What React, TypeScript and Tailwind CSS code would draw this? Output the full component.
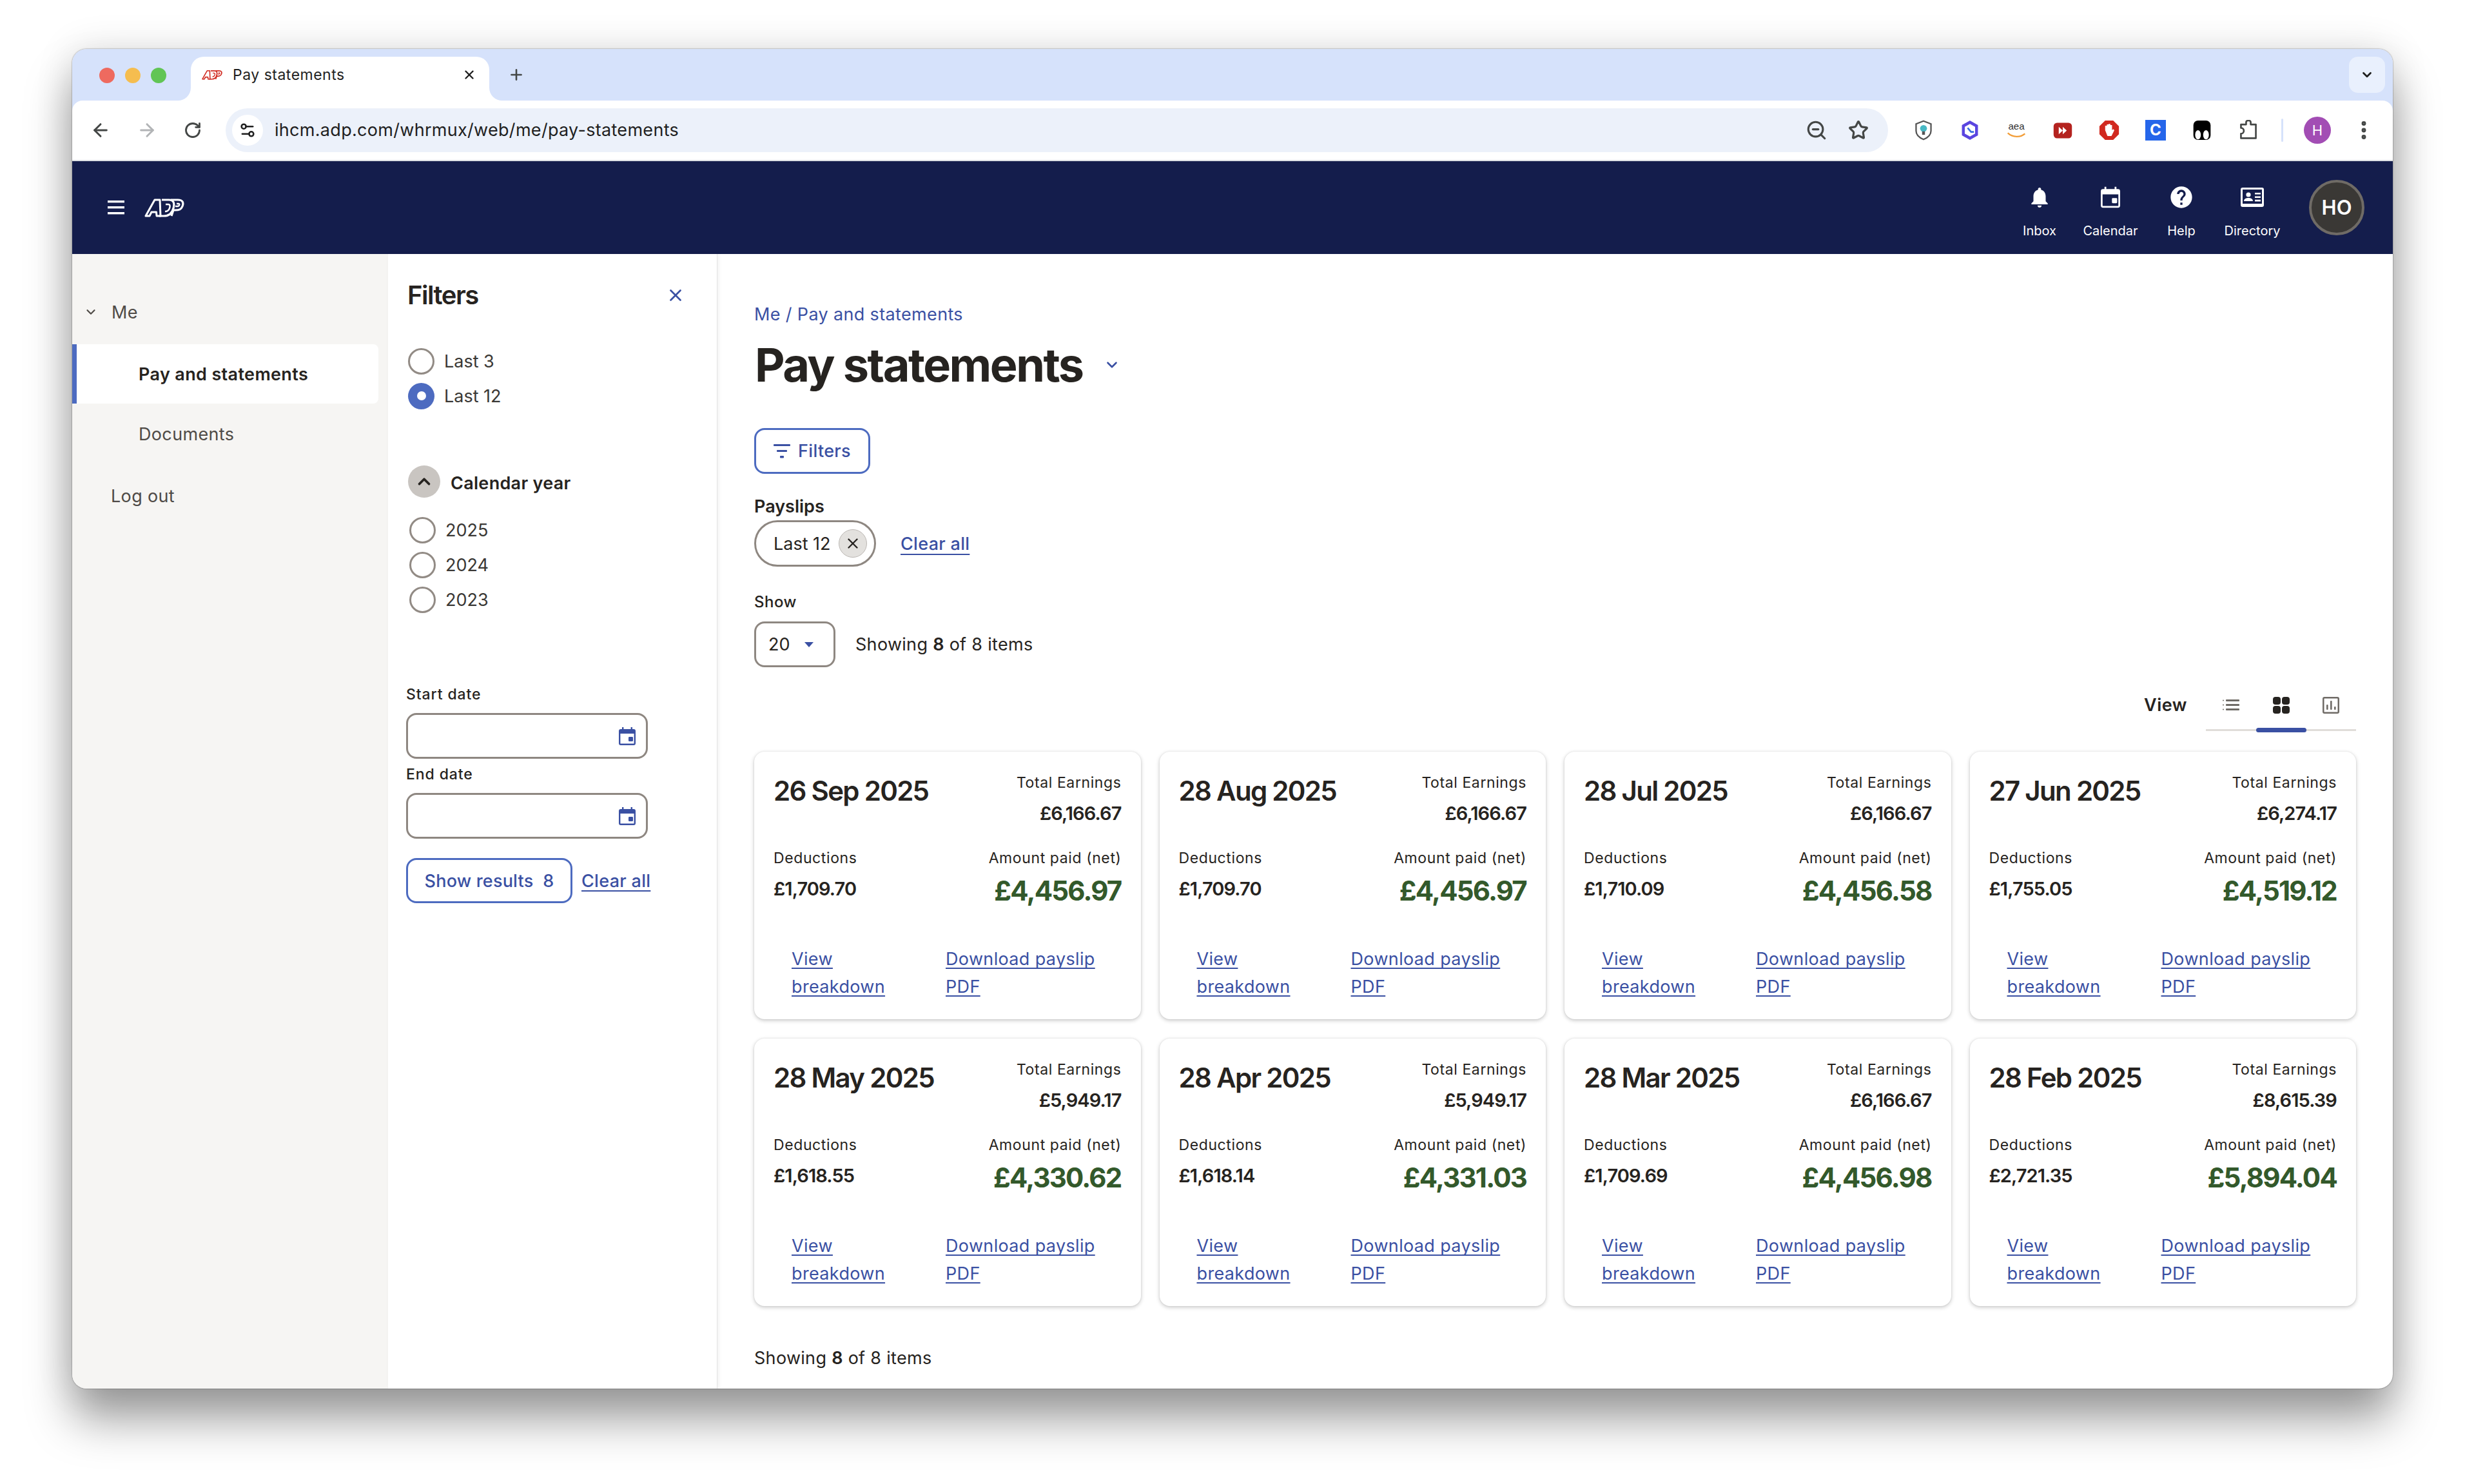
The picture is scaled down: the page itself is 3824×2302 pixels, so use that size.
import { ArrowLeft, ArrowRight, ChevronDown, ChevronUp, EllipsisVertical, Plus, RotateCw, Settings2, Star, X, ZoomOut } from 'lucide-react';

const slips = [
  { date: '26 Sep 2025', total: '£6,166.67', deductions: '£1,709.70', net: '£4,456.97' },
  { date: '28 Aug 2025', total: '£6,166.67', deductions: '£1,709.70', net: '£4,456.97' },
  { date: '28 Jul 2025', total: '£6,166.67', deductions: '£1,710.09', net: '£4,456.58' },
  { date: '27 Jun 2025', total: '£6,274.17', deductions: '£1,755.05', net: '£4,519.12' },
  { date: '28 May 2025', total: '£5,949.17', deductions: '£1,618.55', net: '£4,330.62' },
  { date: '28 Apr 2025', total: '£5,949.17', deductions: '£1,618.14', net: '£4,331.03' },
  { date: '28 Mar 2025', total: '£6,166.67', deductions: '£1,709.69', net: '£4,456.98' },
  { date: '28 Feb 2025', total: '£8,615.39', deductions: '£2,721.35', net: '£5,894.04' },
];

function AdpLogo({ className, color }: { className: string; color: string }) {
  return (
    <svg viewBox="0 0 62 30" className={className} fill="none" stroke={color} strokeLinejoin="round">
      <path d="M2 28 L16 3 H24 L25 28 H19 L18.500 22 H11 L8 28 Z" strokeWidth="3" />
      <path d="M27 3 H38 C46 3 47 9 45 16 C43 24 38 28 30 28 H23" strokeWidth="3.200" />
      <path d="M41 3 H52 C60 3 61 8 59 13 C57 18 54 19 48 19 H45 L42 28" strokeWidth="3.200" />
      <path d="M33 10 H37 C40 10 40 13 39 16 C38 19 35 21 32 21" strokeWidth="2.400" />
      <path d="M50 9 H53 C55 9 55 12 52 13 H48" strokeWidth="2.400" />
    </svg>
  );
}

function CalendarIcon({ className }: { className: string }) {
  return (
    <svg viewBox="0 0 26 28" className={className} fill="currentColor">
      <path d="M5 0h2.400v3h11.200V0H21v3h2a3 3 0 0 1 3 3v19a3 3 0 0 1-3 3H3a3 3 0 0 1-3-3V6a3 3 0 0 1 3-3h2zM2.400 10v15c0 .4.2.6.6.6h20c.4 0 .6-.2.6-.6V10z" fillRule="evenodd" />
      <rect x="15" y="15" width="7" height="7" rx="1.200" />
    </svg>
  );
}

function Radio({ checked, label }: { checked?: boolean; label: string }) {
  return (
    <div className="flex h-[54px] items-center gap-[15px]">
      {checked ? (
        <span className="flex h-[41px] w-[41px] items-center justify-center rounded-full bg-[#4d6bc0]">
          <span className="h-[14px] w-[14px] rounded-full bg-white" />
        </span>
      ) : (
        <span className="h-[41px] w-[41px] rounded-full border-[3px] border-[#928b85] bg-white" />
      )}
      <span className="pt-[2px] text-[27px] text-[#3a3835]">{label}</span>
    </div>
  );
}

function NavItem({ label, children }: { label: string; children: React.ReactNode }) {
  return (
    <div className="mt-[15px] flex w-[110px] flex-col items-center text-white">
      <div className="flex h-[36px] items-center justify-center">{children}</div>
      <span className="mt-[21px] text-[20px] leading-[26px]">{label}</span>
    </div>
  );
}

function DateField({ label }: { label: string }) {
  return (
    <>
      <div className="pt-[2px] text-[23px] leading-[29px] font-medium tracking-[0.9px] text-[#262320]">{label}</div>
      <div className="mt-[14px] flex h-[71px] w-[375px] items-center justify-end rounded-[16px] border-[3px] border-[#8e8781] pr-[16px] text-[#3a50a3]">
        <CalendarIcon className="h-[28px] w-[26px]" />
      </div>
    </>
  );
}

function SlipCard({ slip }: { slip: (typeof slips)[number] }) {
  return (
    <div className="h-[415px] rounded-[16px] bg-white px-[30px] pt-[24px] shadow-[0_2px_6px_rgba(0,0,0,0.22),0_0_3px_rgba(0,0,0,0.08)]">
      <div className="flex justify-between">
        <div className="text-[42px] leading-[74px] font-semibold tracking-[-1.7px] text-[#262320]">{slip.date}</div>
        <div className="text-right leading-[48px] text-[#262320]">
          <div className="text-[23px] tracking-[0.6px]">Total Earnings</div>
          <div className="text-[29px] font-semibold tracking-[-0.9px]">{slip.total}</div>
        </div>
      </div>
      <div className="mt-[21px] flex justify-between text-[#262320]">
        <div className="leading-[48px]">
          <div className="text-[23px] tracking-[0.6px]">Deductions</div>
          <div className="text-[29px] font-semibold tracking-[-0.9px]">{slip.deductions}</div>
        </div>
        <div className="text-right">
          <div className="text-[23px] leading-[48px] tracking-[0.6px]">Amount paid (net)</div>
          <div className="text-[42px] leading-[54px] font-bold tracking-[-1.8px] text-[#33592b]">{slip.net}</div>
        </div>
      </div>
      <div className="mt-[57px] flex pl-[28px] text-[27px] leading-[43px] tracking-[0.35px] text-[#3a50a3] underline underline-offset-[4px] [text-decoration-skip-ink:none]">
        <div className="w-[239px]">View<br />breakdown</div>
        <div>Download payslip<br />PDF</div>
      </div>
    </div>
  );
}

export default function App() {
  return (
    <div className="h-[2302px] w-[3824px] overflow-hidden bg-white pt-[76px] pl-[112px] font-['Inter',sans-serif]">
      <div className="flex h-[2078px] w-[3600px] flex-col overflow-hidden rounded-[22px] bg-white shadow-[0_0_2px_rgba(0,0,0,0.55),0_48px_70px_rgba(0,0,0,0.38),0_0_60px_rgba(0,0,0,0.12)]">
        {/* browser chrome */}
        <div className="bg-[#d6e2fb]">
          <div className="flex h-[80px] items-end pr-[12px] pl-[42px]">
            <div className="mb-[27px] flex gap-[16px]">
              <span className="h-[24px] w-[24px] rounded-full bg-[#ee6a5f]" />
              <span className="h-[24px] w-[24px] rounded-full bg-[#f5bd4f]" />
              <span className="h-[24px] w-[24px] rounded-full bg-[#61c554]" />
            </div>
            <div className="relative ml-[38px] flex h-[68px] w-[463px] items-center rounded-t-[20px] bg-white pr-[20px] pb-[12px] pl-[17px]">
              <span className="absolute bottom-0 -left-[20px] h-[20px] w-[20px] bg-white"><span className="block h-full w-full rounded-br-[20px] bg-[#d6e2fb]" /></span>
              <span className="absolute -right-[20px] bottom-0 h-[20px] w-[20px] bg-white"><span className="block h-full w-full rounded-bl-[20px] bg-[#d6e2fb]" /></span>
              <AdpLogo className="h-[16px] w-[32px]" color="#d0271d" />
              <span className="ml-[16px] text-[23px] tracking-[0.5px] text-[#1f1f1f]">Pay statements</span>
              <X className="ml-auto h-[22px] w-[22px] text-[#1f1f1f]" strokeWidth={2.6} />
            </div>
            <Plus className="mb-[27px] ml-[29px] h-[26px] w-[26px] text-[#444746]" strokeWidth={2.4} />
            <div className="ml-auto mb-[12px] flex h-[56px] w-[56px] items-center justify-center rounded-[14px] bg-[#e9f0fd]">
              <ChevronDown className="h-[22px] w-[22px] text-[#1f1f1f]" strokeWidth={3} />
            </div>
          </div>
          <div className="flex h-[94px] items-center rounded-t-[16px] border-b-[2px] border-[#dfe2e6] bg-white text-[#444746]">
            <ArrowLeft className="ml-[28px] h-[32px] w-[32px]" strokeWidth={2.2} />
            <ArrowRight className="ml-[40px] h-[32px] w-[32px] text-[#b2b4b6]" strokeWidth={2.2} />
            <RotateCw className="ml-[41px] h-[28px] w-[28px]" strokeWidth={2.4} />
            <div className="ml-[37px] flex h-[68px] w-[2579px] items-center rounded-full bg-[#ecf1fa] pr-[30px] pl-[10px]">
              <span className="flex h-[48px] w-[48px] items-center justify-center rounded-full bg-white">
                <Settings2 className="h-[28px] w-[28px] text-[#1f1f1f]" strokeWidth={2.2} />
              </span>
              <span className="ml-[18px] text-[27px] tracking-[0.3px] text-[#1f1f1f]">ihcm.adp.com/whrmux/web/me/pay-statements</span>
              <ZoomOut className="ml-auto h-[34px] w-[34px]" strokeWidth={2.2} />
              <Star className="ml-[32px] h-[32px] w-[32px]" strokeWidth={2.4} />
            </div>
            <div className="ml-[39px] flex items-center gap-[40px]">
              <svg viewBox="0 0 36 36" className="h-[32px] w-[32px]"><path d="M18 2 L31 7 V19 C31 26 25 31 18 34 C11 31 5 26 5 19 V7 Z" fill="#fff" stroke="#555" strokeWidth="2.600" /><circle cx="18" cy="15" r="6" fill="#47b8c4" /><rect x="15.500" y="20" width="5" height="6" fill="#555" /></svg>
              <svg viewBox="0 0 36 36" className="h-[32px] w-[32px]"><path d="M18 1 L32 9 V27 L18 35 L4 27 V9 Z" fill="#5a45e0" /><path d="M18 7 L27 12 V24 L18 29 L9 24 V12 Z" fill="#fff" /><path d="M14 14 L20 21 H25" stroke="#3b6fe0" strokeWidth="3" fill="none" /></svg>
              <svg viewBox="0 0 36 36" className="h-[32px] w-[32px]"><text x="18" y="17" textAnchor="middle" fontSize="17" fill="#333" fontFamily="Liberation Sans">aea</text><path d="M3 23 C12 31 25 31 33 24" stroke="#f29d38" strokeWidth="2.600" fill="none" /></svg>
              <svg viewBox="0 0 36 36" className="h-[32px] w-[32px]"><rect x="2" y="5" width="32" height="27" rx="6" fill="#b4231f" /><path d="M11 12 L18 18.500 L11 25 Z M18 12 L25 18.500 L18 25 Z" fill="#fff" /></svg>
              <svg viewBox="0 0 36 36" className="h-[32px] w-[32px]"><path d="M11 1 H25 L35 11 V25 L25 35 H11 L1 25 V11 Z" fill="#d1291f" /><path d="M11 18 V10 h3 V8 h3 V7 h3 v2 h3 v9 l2-2 2 2 -5 10 H15 Z" fill="#fff" /></svg>
              <span className="flex h-[32px] w-[32px] items-center justify-center bg-[#2566ea] text-[24px] font-bold text-white">C</span>
              <svg viewBox="0 0 36 36" className="h-[32px] w-[32px]"><rect x="3" y="1" width="30" height="34" rx="8" fill="#000" /><ellipse cx="11" cy="26" rx="5" ry="8" fill="#fff" /><ellipse cx="25" cy="26" rx="5" ry="8" fill="#fff" /></svg>
              <svg viewBox="0 0 36 36" className="h-[32px] w-[32px]"><path d="M5 8 H14 V4 a4 3 0 0 1 8 0 V8 H31 V32 H5 V24 a5 5 0 0 0 0-10 Z" fill="none" stroke="#444746" strokeWidth="3" strokeLinejoin="round" /></svg>
            </div>
            <span className="ml-[35px] h-[36px] w-[3px] rounded-full bg-[#d6e2fb]" />
            <span className="ml-[32px] flex h-[42px] w-[42px] items-center justify-center rounded-full bg-[#a24db4] text-[22px] text-white">H</span>
            <EllipsisVertical className="ml-[33px] h-[36px] w-[36px]" strokeWidth={2.6} />
          </div>
        </div>
        {/* ADP header */}
        <div className="flex h-[144px] items-center bg-[#141d4c] pr-[44px] pl-[55px]">
          <svg viewBox="0 0 26 22" className="h-[22px] w-[26px]" fill="#fff"><rect width="26" height="3.400" /><rect y="9" width="26" height="3.400" /><rect y="18" width="26" height="3.400" /></svg>
          <AdpLogo className="ml-[31px] h-[30px] w-[62px]" color="#fff" />
          <div className="ml-auto flex items-center">
            <NavItem label="Inbox">
              <svg viewBox="0 0 24 24" className="h-[38px] w-[38px]" fill="#fff"><path d="M12 22c1.100 0 2-.9 2-2h-4c0 1.100.9 2 2 2zm6-6v-5c0-3.070-1.630-5.640-4.500-6.320V4c0-.83-.67-1.500-1.500-1.500s-1.500.67-1.500 1.500v.68C7.640 5.360 6 7.920 6 11v5l-2 2v1h16v-1l-2-2z" /></svg>
            </NavItem>
            <NavItem label="Calendar">
              <CalendarIcon className="h-[34px] w-[30px]" />
            </NavItem>
            <NavItem label="Help">
              <svg viewBox="0 0 24 24" className="h-[40px] w-[40px]" fill="#fff"><path d="M12 2C6.480 2 2 6.480 2 12s4.480 10 10 10 10-4.480 10-10S17.520 2 12 2zm1 17h-2v-2h2v2zm2.070-7.750l-.9.92C13.450 12.900 13 13.500 13 15h-2v-.5c0-1.100.45-2.100 1.170-2.830l1.240-1.260c.37-.36.59-.86.59-1.410 0-1.100-.9-2-2-2s-2 .9-2 2H8c0-2.210 1.790-4 4-4s4 1.790 4 4c0 .88-.36 1.680-.93 2.250z" /></svg>
            </NavItem>
            <NavItem label="Directory">
              <svg viewBox="0 0 36 30" className="h-[30px] w-[36px]" fill="#fff"><path fillRule="evenodd" d="M3 0h30a3 3 0 0 1 3 3v24a3 3 0 0 1-3 3H3a3 3 0 0 1-3-3V3a3 3 0 0 1 3-3zm0 3v22h30V3z" /><circle cx="12" cy="11" r="3.600" /><path d="M5 21c0-4 4-5 7-5s7 1 7 5zM22 8h9v2.600h-9zM22 13.400h9V16h-9zM22 18.800h9v2.600h-9z" /></svg>
            </NavItem>
            <div className="ml-[33px] flex h-[86px] w-[86px] items-center justify-center rounded-full border-[4px] border-[#6f6b66] bg-[#3a3835] text-[31px] font-semibold text-white">HO</div>
          </div>
        </div>
        {/* body */}
        <div className="flex min-h-0 flex-1">
          <aside className="w-[490px] bg-[#f6f5f3] pt-[70px] pr-[15px] text-[27px] tracking-[0.35px] text-[#4f4b47]">
            <div className="flex h-[40px] items-center pl-[18px]">
              <ChevronDown className="h-[22px] w-[22px]" strokeWidth={2.4} />
              <span className="ml-[21px] pt-[2px]">Me</span>
            </div>
            <div className="mt-[30px] flex h-[92px] items-center rounded-r-[8px] border-l-[7px] border-[#4d6bc0] bg-white pt-[2px] pl-[96px] font-semibold text-[#262320]">Pay and statements</div>
            <div className="mt-[1px] flex h-[92px] items-center pt-[2px] pl-[103px]">Documents</div>
            <div className="mt-[31px] flex h-[40px] items-center pl-[60px]">Log out</div>
          </aside>
          <section className="w-[511px] border-r border-[#e4e4e4] pt-[39px] pl-[28px] shadow-[2px_0_6px_rgba(0,0,0,0.06)]">
            <div className="flex h-[50px] items-center justify-between pr-[49px] pl-[2px]">
              <h2 className="text-[40px] font-semibold tracking-[-1.5px] text-[#262320]">Filters</h2>
              <X className="h-[30px] w-[30px] text-[#3a50a3]" strokeWidth={2.2} />
            </div>
            <div className="mt-[50px] ml-[3px]">
              <Radio label="Last 3" />
              <Radio checked label="Last 12" />
            </div>
            <div className="mt-[81px] ml-[3px] flex h-[50px] items-center gap-[16px]">
              <span className="flex h-[50px] w-[50px] items-center justify-center rounded-full bg-[#c9c5c1] text-[#262320]"><ChevronUp className="h-[30px] w-[30px]" strokeWidth={3} /></span>
              <span className="pt-[6px] text-[27px] font-semibold tracking-[0.3px] text-[#262320]">Calendar year</span>
            </div>
            <div className="mt-[23px] ml-[5px]">
              <Radio label="2025" />
              <Radio label="2024" />
              <Radio label="2023" />
            </div>
            <div className="mt-[104px]">
              <DateField label="Start date" />
            </div>
            <div className="mt-[8px]">
              <DateField label="End date" />
            </div>
            <div className="mt-[30px] flex items-center">
              <div className="flex h-[70px] w-[258px] items-center justify-center rounded-[16px] border-[3px] border-[#4d6bc0] pt-[2px] text-[27px] font-medium tracking-[0.2px] whitespace-pre text-[#3a50a3]">Show results  8</div>
              <span className="ml-[14px] pt-[2px] text-[27px] font-medium tracking-[0.3px] text-[#3a50a3] underline underline-offset-[5px]">Clear all</span>
            </div>
          </section>
          <main className="flex-1 px-[57px] pt-[76px] text-[#262320]">
            <div className="text-[27px] leading-[36px] tracking-[0.35px] text-[#3a50a3]">Me / Pay and statements</div>
            <div className="mt-[15px] flex h-[90px] items-center">
              <h1 className="ml-[1px] text-[72px] font-bold tracking-[-2.5px]">Pay statements</h1>
              <ChevronDown className="ml-[32px] h-[26px] w-[26px] text-[#3a50a3]" strokeWidth={2.4} />
            </div>
            <div className="mt-[53px] flex h-[71px] w-[180px] items-center justify-center gap-[12px] rounded-[16px] border-[3px] border-[#4d6bc0] text-[27px] font-medium tracking-[0.3px] text-[#3a50a3]">
              <svg viewBox="0 0 26 22" className="h-[22px] w-[26px]" fill="currentColor"><rect width="26" height="3" rx="1" /><rect x="5" y="9" width="16" height="3" rx="1" /><rect x="10" y="18" width="6" height="3.400" rx="1" /></svg>
              <span className="pt-[2px]">Filters</span>
            </div>
            <div className="mt-[33px] text-[27px] leading-[36px] font-semibold">Payslips</div>
            <div className="mt-[3px] flex items-center">
              <div className="flex h-[72px] w-[189px] items-center rounded-full border-[3px] border-[#8e8781] pr-[11px] pl-[27px] text-[27px]">
                <span className="pt-[2px]">Last 12</span>
                <span className="ml-auto flex h-[44px] w-[44px] items-center justify-center rounded-full border border-[#bcb8b4] bg-[#e3e1de]"><X className="h-[26px] w-[26px]" strokeWidth={2.2} /></span>
              </div>
              <span className="ml-[38px] pt-[2px] text-[27px] font-medium tracking-[0.3px] text-[#3a50a3] underline underline-offset-[6px]">Clear all</span>
            </div>
            <div className="mt-[38px] pt-[2px] text-[24px] leading-[30px] font-medium tracking-[0.5px]">Show</div>
            <div className="mt-[15px] flex items-center">
              <div className="flex h-[71px] w-[126px] items-center rounded-[16px] border-[3px] border-[#8e8781] pl-[19px] text-[27px]">
                <span className="pt-[2px]">20</span>
                <span className="ml-[22px] h-0 w-0 border-x-[7px] border-t-[8px] border-x-transparent border-t-[#3a50a3]" />
              </div>
              <span className="ml-[31px] pt-[2px] text-[27px] tracking-[0.3px]">Showing <b className="font-semibold">8</b> of 8 items</span>
            </div>
            <div className="mt-[31px] flex h-[70px] items-start justify-end">
              <span className="mr-[29px] text-[27px] leading-[56px] font-semibold tracking-[0.5px]">View</span>
              <div className="relative flex h-[70px] w-[233px] border-b-0">
                <span className="absolute right-0 bottom-[2px] left-0 h-[3px] bg-[#e0ddd9]" />
                <span className="absolute bottom-0 left-[78px] h-[7px] w-[78px] rounded-full bg-[#3a50a3]" />
                <div className="flex h-[56px] w-[78px] items-center justify-center">
                  <svg viewBox="0 0 26 18" className="h-[18px] w-[26px]" fill="#6f6b66"><rect x="5" width="21" height="3" rx="1" /><rect x="5" y="7" width="21" height="3" rx="1" /><rect x="5" y="14" width="21" height="3" rx="1" /><circle cx="1" cy="1.500" r="1" /><circle cx="1" cy="8.500" r="1" /><circle cx="1" cy="15.500" r="1" /></svg>
                </div>
                <div className="flex h-[56px] w-[78px] items-center justify-center">
                  <svg viewBox="0 0 26 26" className="h-[26px] w-[26px]" fill="#262320"><rect width="12" height="12" rx="4" /><rect x="14" width="12" height="12" rx="4" /><rect y="14" width="12" height="12" rx="4" /><rect x="14" y="14" width="12" height="12" rx="4" /></svg>
                </div>
                <div className="flex h-[56px] w-[78px] items-center justify-center">
                  <svg viewBox="0 0 26 26" className="h-[26px] w-[26px]" fill="#6f6b66"><path fillRule="evenodd" d="M3 0h20a3 3 0 0 1 3 3v20a3 3 0 0 1-3 3H3a3 3 0 0 1-3-3V3a3 3 0 0 1 3-3zm0 2.500a.5.5 0 0 0-.5.5v20a.5.5 0 0 0 .5.5h20a.5.5 0 0 0 .5-.5V3a.5.5 0 0 0-.5-.5z" /><rect x="6" y="12" width="2.600" height="8" rx="1" /><rect x="12" y="6" width="2.600" height="14" rx="1" /><rect x="18" y="15" width="2.600" height="5" rx="1" /></svg>
                </div>
              </div>
            </div>
            <div className="mt-[30px] grid grid-cols-4 gap-x-[29px] gap-y-[30px]">
              {slips.map((slip) => (
                <SlipCard key={slip.date} slip={slip} />
              ))}
            </div>
            <div className="mt-[63px] text-[27px] leading-[36px] tracking-[0.3px]">Showing <b className="font-semibold">8</b> of 8 items</div>
          </main>
        </div>
      </div>
    </div>
  );
}
